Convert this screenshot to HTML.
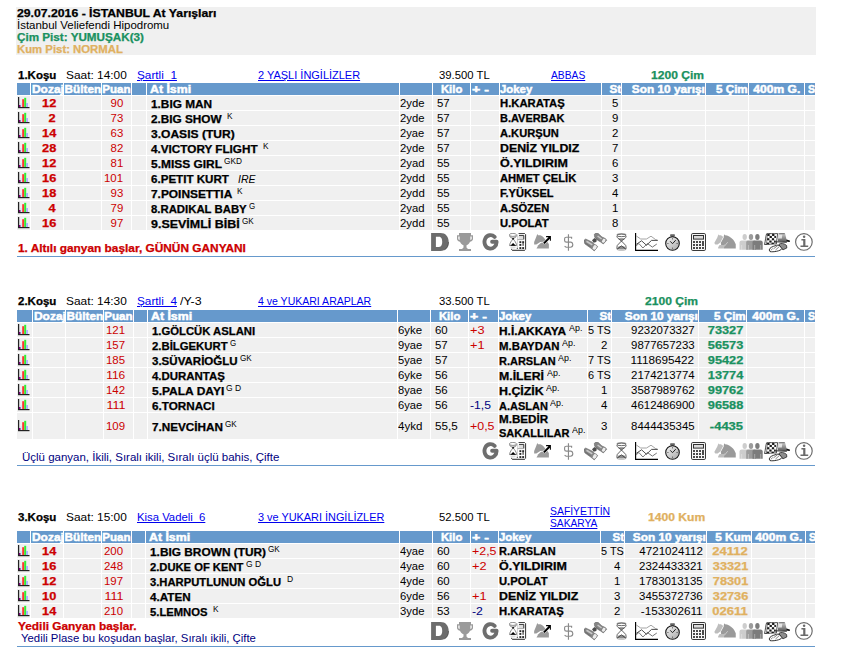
<!DOCTYPE html>
<html><head><meta charset="utf-8"><title>İstanbul At Yarışları</title>
<style>
html,body{margin:0;padding:0;background:#fff}
body{width:845px;height:662px;position:relative;overflow:hidden;font-family:"Liberation Sans",sans-serif;font-size:10.2px;line-height:12px;color:#000}
.r,.t,.c,.a{position:absolute}
.t{white-space:nowrap;height:12px;transform-origin:0 0}
.b{font-weight:bold;-webkit-text-stroke:0.25px} .u{text-decoration:underline} .i{font-style:italic}
.c{overflow:hidden}
.h{-webkit-text-stroke:0.45px #fff}
</style></head>
<body>
<svg width="0" height="0" style="position:absolute"><defs>
<linearGradient id="gw" x1="0" y1="0" x2="1" y2="1"><stop offset="0" stop-color="#f4f4f4"/><stop offset="1" stop-color="#a8a8a8"/></linearGradient>
<linearGradient id="gh" x1="0" y1="0" x2="0" y2="1"><stop offset="0" stop-color="#ccc"/><stop offset="1" stop-color="#555"/></linearGradient>
<symbol id="bar" viewBox="0 0 12 12"><rect x="0" y="0" width="1.200" height="11" fill="#222"/><rect x="0" y="10" width="11.500" height="1.200" fill="#222"/><rect x="2.200" y="6" width="2" height="4" fill="#d4ecf7"/><rect x="4.200" y="2.200" width="2" height="7.800" fill="#f33"/><rect x="6.200" y="0.800" width="2" height="9.200" fill="#3e3"/><rect x="8.200" y="6" width="1.700" height="4" fill="#a9a9ff"/><rect x="1" y="8" width="1.500" height="2" fill="#707"/></symbol>
<symbol id="iD" viewBox="0 0 19 20"><path fill-rule="evenodd" d="M.1.100H9.500C14.500.100 17.700 3.500 17.700 9S14.500 17.900 9.500 17.900H.1ZM4.900 3.700V13.900H8C10.400 13.900 11.200 11.500 11.200 8.800 11.200 6 10.400 3.700 8 3.700Z" fill="#6c6c6c"/><path d="M13.500 16.800C16.200 15.500 17.500 12.500 17.500 9" fill="none" stroke="#3c3c3c" stroke-width=".6"/></symbol>
<symbol id="iT" viewBox="0 0 19 20"><path fill-rule="evenodd" d="M3 .1H15V2.300H17V6C17 7.500 15.500 8.500 14 8.700 13.300 10.500 12 11.500 10.500 12.200V14.600L12 16H15V17.900H3V16H6L7.500 14.600V12.200C6 11.500 4.700 10.500 4 8.700 2.500 8.500 1 7.500 1 6V2.300H3ZM2.300 3.600V5.600C2.300 6.300 2.800 6.800 3.600 7V3.600ZM15.700 3.600H14.400V7C15.200 6.800 15.700 6.300 15.700 5.600Z" fill="#9a9a9a"/></symbol>
<symbol id="iG" viewBox="0 0 19 20"><path d="M12.600 3.900A6.060 6.720 0 1 0 14.600 8.800H10.100" fill="none" stroke="#6e6e6e" stroke-width="3.900" stroke-linecap="round" stroke-linejoin="round"/></symbol>
<symbol id="iCH" viewBox="0 0 19 20"><rect x="8.300" y=".5" width="8.300" height="16.900" rx=".8" fill="#fff"/><path d="M9.600.5H15.900" fill="none" stroke="#333" stroke-width=".9"/><path d="M16.600 1.200V16.600" fill="none" stroke="#333" stroke-width="1"/><path d="M3.100 17.300H15.900" fill="none" stroke="#333" stroke-width="1.100"/><path d="M8.500 1.500V14" stroke="#bbb" stroke-width=".6"/><rect x="9.600" y="2.700" width="5.200" height="3.700" fill="#ddd"/><path d="M10 2.400H14.800V6.400" fill="none" stroke="#333" stroke-width="1"/><path d="M8.600 6.600H14.800" stroke="#888" stroke-width=".7"/><g fill="#2a2a2a"><rect x="10.400" y="8.200" width="1.900" height="1.900"/><rect x="13.200" y="8.200" width="1.900" height="1.900"/><rect x="10.400" y="11" width="1.900" height="1.900"/><rect x="10.400" y="14.100" width="1.900" height="1.900"/><rect x="13.200" y="14.100" width="1.900" height="1.900"/><rect x="7.800" y="14.700" width="1.100" height="1.100"/><rect x="2.100" y="15.800" width="1" height="1"/></g><rect x="13.300" y="10" width="1.700" height="2.800" fill="#777"/><path d="M.4 2.600C.8 4.500 3.300 5 4.100 5.800 4.900 5 7.200 4.500 7.600 2.600ZM4.100 5.800C2.500 8 .9 9.500.6 12.600H7.600C7.300 9.500 5.700 8 4.100 5.800Z" fill="#fff" stroke="#555" stroke-width=".7"/><ellipse cx="3.900" cy="1.900" rx="3.600" ry="1.500" fill="#fff" stroke="#888" stroke-width=".9"/><path d="M.9 3.400C2.500 4.300 5.500 4.300 7.100 3.400" fill="none" stroke="#999" stroke-width=".8"/><circle cx="4.100" cy="5.700" r=".9" fill="#111"/><path d="M4.100 10.100L7 12.700H1.300Z" fill="#000"/><ellipse cx="4" cy="14.600" rx="2.800" ry=".9" fill="#ddd"/></symbol>
<symbol id="iAR" viewBox="0 0 19 20"><path d="M3.300 1L4.100 2.300H6.300C8.600 3 10.300 5 11 6.300L13 8.500 6.300 9 2.300 11.600H.15V9L2 4.600Z" fill="#9b9b9b"/><path d="M7.100 9.700L13.500 9 14.900 11.300V15.600H2.500L4.300 12.300Z" fill="#9b9b9b"/><path d="M12.100 3H16.900V7.800H15.900V5.700L10.600 11.100 9.200 9.700 14.500 4.200H12.100Z" fill="#000" stroke="#fff" stroke-width="1" paint-order="stroke" stroke-linejoin="round"/></symbol>
<symbol id="iDL" viewBox="0 0 12 20"><path d="M8.600 5.800V4.200H3.200C2.200 4.200 1.600 4.900 1.600 5.800V7.400C1.600 8.400 2.400 9.100 3.500 9.100H8C9.300 9.400 9.800 10.600 9.800 11.600 9.800 13 8.600 14.200 7.400 14.200H3.200L1.600 13.200M5.450 1.200V17.800" fill="none" stroke="#8a8a8a" stroke-width="1.150"/></symbol>
<symbol id="iBI" viewBox="0 0 24 20"><path d="M0 7.300L1.650 6 8 9 11.300 12 13.600 13.600 10.300 17.900 7 15.300 1 11 0 9Z" fill="#858585" stroke="#5a5a5a" stroke-width=".5"/><path d="M2.500 8.300L8.300 11.900" stroke="#c9c9c9" stroke-width="1.600"/><path d="M1.200 10L6.800 14" stroke="#6a6a6a" stroke-width=".9"/><path d="M10.300 1.300L12 0 14 .3 18 4 21.300 5.600 22.700 7.300 19.300 11 16.600 9 12.600 6.600 10.600 4Z" fill="#858585" stroke="#5a5a5a" stroke-width=".5"/><path d="M13.600 3L17.600 6" stroke="#c9c9c9" stroke-width="1.500"/><path d="M11.500 4.700L15.800 8" stroke="#6a6a6a" stroke-width=".8"/><path d="M8 7.200L10.500 5 12.800 6.800 12.300 9 9.600 9.800Z" fill="#4e4e4e"/><ellipse cx="10.700" cy="14.400" rx="2.100" ry="2.900" transform="rotate(33 10.700 14.400)" fill="#ececec" stroke="#666" stroke-width=".5"/><ellipse cx="19.700" cy="7.700" rx="1.900" ry="2.600" transform="rotate(33 19.700 7.700)" fill="#ececec" stroke="#666" stroke-width=".5"/></symbol>
<symbol id="iHG" viewBox="0 0 12 20"><ellipse cx="5.500" cy="1.700" rx="4.900" ry="1.600" fill="#b5b5b5"/><path d="M.9 3C1 4 1.200 4.600 2 5.400L5.460 8 9 5.400C9.800 4.600 10 4 10.100 3ZM5.460 8L1.300 12.400C.8 13.500.8 15 1.100 16.300H9.900C10.200 15 10.200 13.500 9.700 12.400Z" fill="#fff"/><path d="M2.400 5.600C3.500 5 7.500 5 8.600 5.600L5.460 7.900Z" fill="#8a8a8a"/><path d="M1.200 16.300A4.300 3.400 0 0 1 9.800 16.300Z" fill="#8a8a8a"/><path d="M.9 3C1 4 1.200 4.600 2 5.400L5.460 8 9 5.400C9.800 4.600 10 4 10.100 3M5.460 8L1.300 12.400C.8 13.500.8 15 1.100 16.300M5.460 8L9.700 12.400C10.200 13.500 10.200 15 9.900 16.300" fill="none" stroke="#3c3c3c" stroke-width=".8"/><path d="M1.100 16.300L5.460 12.800 9.900 16.300" fill="none" stroke="#3c3c3c" stroke-width=".8"/><ellipse cx="5.500" cy="2.400" rx="4.600" ry="1.250" fill="#fff" stroke="#444" stroke-width=".8"/><ellipse cx="5.500" cy="17" rx="4.200" ry=".8" fill="#b5b5b5"/></symbol>
<symbol id="iLC" viewBox="0 0 24 20"><path d="M.6 0V17.350H23" fill="none" stroke="#000" stroke-width="1.150"/><path d="M1.200 2.900L5.700 6H11.500L16 3.200 20.500 6.500 22.700 7.400" fill="none" stroke="#9a9a9a" stroke-width=".9"/><path d="M1.200 11.400L6.600 7.800 11.500 12.300 16.500 7.400H22.700" fill="none" stroke="#3a3a3a" stroke-width=".9"/><path d="M1.200 12.800L3.900 10.500 7.900 15 12.400 10.500 17.400 14.100 21.800 11" fill="none" stroke="#666" stroke-width=".9"/></symbol>
<symbol id="iSW" viewBox="0 0 16 20"><rect x="5.200" y="1" width="4.600" height="2.800" rx="1.200" fill="#555"/><rect x="5.800" y="1.300" width="3.400" height="1" rx=".5" fill="#999"/><circle cx="7.500" cy="10.500" r="6.800" fill="url(#gw)" stroke="#111" stroke-width="1.050"/><path d="M5.200 8.300L7.500 10.700 10.700 7.200" fill="none" stroke="#222" stroke-width="1"/><path d="M7.500 5.200V6.400M7.500 14.600V15.800M2.300 10.500H3.500M11.500 10.500H12.700" stroke="#444" stroke-width=".8"/></symbol>
<symbol id="iCA" viewBox="0 0 16 20"><rect x=".5" y=".5" width="14" height="17" rx="1.300" fill="#f7f7f7" stroke="#3a3a3a" stroke-width="1"/><rect x="2.500" y="2.500" width="10" height="3.600" fill="#dcdcdc" stroke="#333" stroke-width="1"/><g fill="#4a4a4a"><rect x="2" y="8" width="2" height="2"/><rect x="5" y="8" width="2" height="2"/><rect x="8" y="8" width="2" height="2"/><rect x="11" y="8" width="2" height="5"/><rect x="2" y="11" width="2" height="2"/><rect x="5" y="11" width="2" height="2"/><rect x="8" y="11" width="2" height="2"/><rect x="2" y="14" width="2" height="2"/><rect x="5" y="14" width="2" height="2"/><rect x="8" y="14" width="2" height="2"/><rect x="11" y="14" width="2" height="2"/></g></symbol>
<symbol id="iHO" viewBox="0 0 23 20"><path d="M10.450 1.150L11 2.300 13 2.500C16 3.500 19 6 20.300 8.300L21.750 11.300V15.600H10V13.500L7 11.800 6.800 9.600 9.600 4.600 10 2.300Z" fill="#9a9a9a"/><path d="M4.300 1.150L5 2.300H7L9 3.650V4.600L6.600 9.300 5.300 10.300 3.600 11.600H1.300L.3 10 3.300 4.600 4.100 2.300Z" fill="#bdbdbd"/><path d="M4.150 15.600V14.300L5.600 12H10L11.200 10.800 10.300 13.300 10 15.600Z" fill="#bdbdbd"/><path d="M13.700 9.200L10.300 13.400M9.400 4.300L6.700 9.500" stroke="#fff" stroke-width=".55" opacity=".85"/></symbol>
<symbol id="iPE" viewBox="0 0 25 20"><ellipse cx="5.700" cy="4" rx="2.200" ry="3" fill="#cdcdcd"/><path d="M.5 16.800V9.600C.5 8.300 1.500 7.600 2.700 7.600H8.500C9.700 7.600 10.500 8.300 10.500 9.600V16.800Z" fill="#cdcdcd"/><ellipse cx="12" cy="4" rx="2.200" ry="3" fill="#9c9c9c"/><path d="M7.200 16.800V9.600C7.200 8.300 8 7.600 9.200 7.600H15C16.200 7.600 17 8.300 17 9.600V16.800Z" fill="#9c9c9c"/><ellipse cx="18.400" cy="4" rx="2.200" ry="3" fill="#7c7c7c"/><path d="M13.500 16.800V9.600C13.500 8.300 14.300 7.600 15.500 7.600H21.500C22.700 7.600 23.700 8.300 23.700 9.600V16.800Z" fill="#7c7c7c"/><path d="M2.700 12V16.800M9.400 12V16.800M15.700 12V16.800M21.700 12V16.800" stroke="#fff" stroke-width=".5" opacity=".7"/></symbol>
<symbol id="iFL" viewBox="0 0 27 20"><path d="M2.600.8C5 .2 9 1 13.600.6L12.300 11C9 10.500 4 11.800.5 11.500 1.500 8 1.600 3.500 2.600.8Z" fill="#fff" stroke="#222" stroke-width=".8"/><g fill="#1a1a1a"><rect x="3.35" y="0.90" width="2.3" height="2.1"/><rect x="3.09" y="5.20" width="2.3" height="2.1"/><rect x="2.82" y="9.60" width="2.3" height="1.5"/><rect x="5.58" y="2.90" width="2.3" height="2.1"/><rect x="5.30" y="7.50" width="2.3" height="2.1"/><rect x="8.10" y="0.90" width="2.3" height="2.1"/><rect x="7.84" y="5.20" width="2.3" height="2.1"/><rect x="7.57" y="9.60" width="2.3" height="1.5"/><rect x="10.33" y="2.90" width="1.6" height="2.1"/><rect x="10.05" y="7.50" width="1.6" height="2.1"/></g><path d="M3.700 1.200C3 4 2.900 8 2.300 11.300" fill="none" stroke="#333" stroke-width=".6"/><path d="M13.800 8.400L14.600 1.300C16 .3 20 .3 21.200.8L22.500 6.500 24.500 7.500 22.800 9.300Z" fill="url(#gh)"/><path d="M14.300 3.800L15 1.600H18.300L17.800 5.600H14.100Z" fill="#f4f4f4" opacity=".8"/><path d="M14.600.7H20.800" stroke="#333" stroke-width=".7"/><path d="M10 8.300L22.600 8.700 22.800 9.700 10.200 9.200Z" fill="#333"/><path d="M22.500 6.600L25.800 7.600 26 8.700 24.800 9 22.600 8.200Z" fill="#111"/><path d="M15 11.300C16.500 9.800 20.500 10.300 22.600 12.500L22.800 15 19 16.800 15.500 14Z" fill="#8e8e8e" stroke="#222" stroke-width=".75"/><path d="M5.200 17C5.500 14.500 9 13.500 11 12.800 13 11.800 15 12 16 13L17.900 15.600C17 18 9 19.300 6 18.600Z" fill="#fff" stroke="#111" stroke-width=".85"/><path d="M9.500 15.800L13.500 12.800M11.500 17L15.300 13.600M7 17.400L8.500 15.500" stroke="#333" stroke-width=".6"/></symbol>
<symbol id="iIN" viewBox="0 0 19 20"><circle cx="8.900" cy="8.950" r="8.300" fill="#fff" stroke="#6a6a6a" stroke-width="1.150"/><circle cx="9.100" cy="3.700" r="1.250" fill="#6a6a6a"/><path d="M6.400 6H10.400V12.400H13.200V14.100H5.500V12.400H8.200V7.500H6.400Z" fill="#6a6a6a"/></symbol>
</defs></svg>

<div class="r" style="left:16px;top:7px;width:800px;height:48px;background:#f0f0f0"></div>
<div class="r" style="left:17px;top:83px;width:13px;height:12px;background:#6699cc"></div>
<div class="r" style="left:31px;top:83px;width:32px;height:12px;background:#6699cc"></div>
<div class="r" style="left:64px;top:83px;width:37px;height:12px;background:#6699cc"></div>
<div class="r" style="left:102px;top:83px;width:29px;height:12px;background:#6699cc"></div>
<div class="r" style="left:132px;top:83px;width:14px;height:12px;background:#6699cc"></div>
<div class="r" style="left:147px;top:83px;width:252px;height:12px;background:#6699cc"></div>
<div class="r" style="left:400px;top:83px;width:32px;height:12px;background:#6699cc"></div>
<div class="r" style="left:433px;top:83px;width:37px;height:12px;background:#6699cc"></div>
<div class="r" style="left:471px;top:83px;width:28px;height:12px;background:#6699cc"></div>
<div class="r" style="left:500px;top:83px;width:101px;height:12px;background:#6699cc"></div>
<div class="r" style="left:602px;top:83px;width:19px;height:12px;background:#6699cc"></div>
<div class="r" style="left:622px;top:83px;width:83px;height:12px;background:#6699cc"></div>
<div class="r" style="left:706px;top:83px;width:42px;height:12px;background:#6699cc"></div>
<div class="r" style="left:749px;top:83px;width:55px;height:12px;background:#6699cc"></div>
<div class="r" style="left:805px;top:83px;width:10px;height:12px;background:#6699cc"></div>
<div class="r" style="left:17px;top:96px;width:13px;height:14px;background:#f0f0f0"></div>
<div class="r" style="left:31px;top:96px;width:32px;height:14px;background:#f0f0f0"></div>
<div class="r" style="left:64px;top:96px;width:37px;height:14px;background:#f0f0f0"></div>
<div class="r" style="left:102px;top:96px;width:29px;height:14px;background:#f0f0f0"></div>
<div class="r" style="left:132px;top:96px;width:14px;height:14px;background:#f0f0f0"></div>
<div class="r" style="left:147px;top:96px;width:252px;height:14px;background:#f0f0f0"></div>
<div class="r" style="left:400px;top:96px;width:32px;height:14px;background:#f0f0f0"></div>
<div class="r" style="left:433px;top:96px;width:37px;height:14px;background:#f0f0f0"></div>
<div class="r" style="left:471px;top:96px;width:28px;height:14px;background:#f0f0f0"></div>
<div class="r" style="left:500px;top:96px;width:101px;height:14px;background:#f0f0f0"></div>
<div class="r" style="left:602px;top:96px;width:19px;height:14px;background:#f0f0f0"></div>
<div class="r" style="left:622px;top:96px;width:83px;height:14px;background:#f0f0f0"></div>
<div class="r" style="left:706px;top:96px;width:42px;height:14px;background:#f0f0f0"></div>
<div class="r" style="left:749px;top:96px;width:55px;height:14px;background:#f0f0f0"></div>
<div class="r" style="left:805px;top:96px;width:10px;height:14px;background:#f0f0f0"></div>
<div class="r" style="left:17px;top:111px;width:13px;height:14px;background:#f0f0f0"></div>
<div class="r" style="left:31px;top:111px;width:32px;height:14px;background:#f0f0f0"></div>
<div class="r" style="left:64px;top:111px;width:37px;height:14px;background:#f0f0f0"></div>
<div class="r" style="left:102px;top:111px;width:29px;height:14px;background:#f0f0f0"></div>
<div class="r" style="left:132px;top:111px;width:14px;height:14px;background:#f0f0f0"></div>
<div class="r" style="left:147px;top:111px;width:252px;height:14px;background:#f0f0f0"></div>
<div class="r" style="left:400px;top:111px;width:32px;height:14px;background:#f0f0f0"></div>
<div class="r" style="left:433px;top:111px;width:37px;height:14px;background:#f0f0f0"></div>
<div class="r" style="left:471px;top:111px;width:28px;height:14px;background:#f0f0f0"></div>
<div class="r" style="left:500px;top:111px;width:101px;height:14px;background:#f0f0f0"></div>
<div class="r" style="left:602px;top:111px;width:19px;height:14px;background:#f0f0f0"></div>
<div class="r" style="left:622px;top:111px;width:83px;height:14px;background:#f0f0f0"></div>
<div class="r" style="left:706px;top:111px;width:42px;height:14px;background:#f0f0f0"></div>
<div class="r" style="left:749px;top:111px;width:55px;height:14px;background:#f0f0f0"></div>
<div class="r" style="left:805px;top:111px;width:10px;height:14px;background:#f0f0f0"></div>
<div class="r" style="left:17px;top:126px;width:13px;height:14px;background:#f0f0f0"></div>
<div class="r" style="left:31px;top:126px;width:32px;height:14px;background:#f0f0f0"></div>
<div class="r" style="left:64px;top:126px;width:37px;height:14px;background:#f0f0f0"></div>
<div class="r" style="left:102px;top:126px;width:29px;height:14px;background:#f0f0f0"></div>
<div class="r" style="left:132px;top:126px;width:14px;height:14px;background:#f0f0f0"></div>
<div class="r" style="left:147px;top:126px;width:252px;height:14px;background:#f0f0f0"></div>
<div class="r" style="left:400px;top:126px;width:32px;height:14px;background:#f0f0f0"></div>
<div class="r" style="left:433px;top:126px;width:37px;height:14px;background:#f0f0f0"></div>
<div class="r" style="left:471px;top:126px;width:28px;height:14px;background:#f0f0f0"></div>
<div class="r" style="left:500px;top:126px;width:101px;height:14px;background:#f0f0f0"></div>
<div class="r" style="left:602px;top:126px;width:19px;height:14px;background:#f0f0f0"></div>
<div class="r" style="left:622px;top:126px;width:83px;height:14px;background:#f0f0f0"></div>
<div class="r" style="left:706px;top:126px;width:42px;height:14px;background:#f0f0f0"></div>
<div class="r" style="left:749px;top:126px;width:55px;height:14px;background:#f0f0f0"></div>
<div class="r" style="left:805px;top:126px;width:10px;height:14px;background:#f0f0f0"></div>
<div class="r" style="left:17px;top:141px;width:13px;height:14px;background:#f0f0f0"></div>
<div class="r" style="left:31px;top:141px;width:32px;height:14px;background:#f0f0f0"></div>
<div class="r" style="left:64px;top:141px;width:37px;height:14px;background:#f0f0f0"></div>
<div class="r" style="left:102px;top:141px;width:29px;height:14px;background:#f0f0f0"></div>
<div class="r" style="left:132px;top:141px;width:14px;height:14px;background:#f0f0f0"></div>
<div class="r" style="left:147px;top:141px;width:252px;height:14px;background:#f0f0f0"></div>
<div class="r" style="left:400px;top:141px;width:32px;height:14px;background:#f0f0f0"></div>
<div class="r" style="left:433px;top:141px;width:37px;height:14px;background:#f0f0f0"></div>
<div class="r" style="left:471px;top:141px;width:28px;height:14px;background:#f0f0f0"></div>
<div class="r" style="left:500px;top:141px;width:101px;height:14px;background:#f0f0f0"></div>
<div class="r" style="left:602px;top:141px;width:19px;height:14px;background:#f0f0f0"></div>
<div class="r" style="left:622px;top:141px;width:83px;height:14px;background:#f0f0f0"></div>
<div class="r" style="left:706px;top:141px;width:42px;height:14px;background:#f0f0f0"></div>
<div class="r" style="left:749px;top:141px;width:55px;height:14px;background:#f0f0f0"></div>
<div class="r" style="left:805px;top:141px;width:10px;height:14px;background:#f0f0f0"></div>
<div class="r" style="left:17px;top:156px;width:13px;height:14px;background:#f0f0f0"></div>
<div class="r" style="left:31px;top:156px;width:32px;height:14px;background:#f0f0f0"></div>
<div class="r" style="left:64px;top:156px;width:37px;height:14px;background:#f0f0f0"></div>
<div class="r" style="left:102px;top:156px;width:29px;height:14px;background:#f0f0f0"></div>
<div class="r" style="left:132px;top:156px;width:14px;height:14px;background:#f0f0f0"></div>
<div class="r" style="left:147px;top:156px;width:252px;height:14px;background:#f0f0f0"></div>
<div class="r" style="left:400px;top:156px;width:32px;height:14px;background:#f0f0f0"></div>
<div class="r" style="left:433px;top:156px;width:37px;height:14px;background:#f0f0f0"></div>
<div class="r" style="left:471px;top:156px;width:28px;height:14px;background:#f0f0f0"></div>
<div class="r" style="left:500px;top:156px;width:101px;height:14px;background:#f0f0f0"></div>
<div class="r" style="left:602px;top:156px;width:19px;height:14px;background:#f0f0f0"></div>
<div class="r" style="left:622px;top:156px;width:83px;height:14px;background:#f0f0f0"></div>
<div class="r" style="left:706px;top:156px;width:42px;height:14px;background:#f0f0f0"></div>
<div class="r" style="left:749px;top:156px;width:55px;height:14px;background:#f0f0f0"></div>
<div class="r" style="left:805px;top:156px;width:10px;height:14px;background:#f0f0f0"></div>
<div class="r" style="left:17px;top:171px;width:13px;height:14px;background:#f0f0f0"></div>
<div class="r" style="left:31px;top:171px;width:32px;height:14px;background:#f0f0f0"></div>
<div class="r" style="left:64px;top:171px;width:37px;height:14px;background:#f0f0f0"></div>
<div class="r" style="left:102px;top:171px;width:29px;height:14px;background:#f0f0f0"></div>
<div class="r" style="left:132px;top:171px;width:14px;height:14px;background:#f0f0f0"></div>
<div class="r" style="left:147px;top:171px;width:252px;height:14px;background:#f0f0f0"></div>
<div class="r" style="left:400px;top:171px;width:32px;height:14px;background:#f0f0f0"></div>
<div class="r" style="left:433px;top:171px;width:37px;height:14px;background:#f0f0f0"></div>
<div class="r" style="left:471px;top:171px;width:28px;height:14px;background:#f0f0f0"></div>
<div class="r" style="left:500px;top:171px;width:101px;height:14px;background:#f0f0f0"></div>
<div class="r" style="left:602px;top:171px;width:19px;height:14px;background:#f0f0f0"></div>
<div class="r" style="left:622px;top:171px;width:83px;height:14px;background:#f0f0f0"></div>
<div class="r" style="left:706px;top:171px;width:42px;height:14px;background:#f0f0f0"></div>
<div class="r" style="left:749px;top:171px;width:55px;height:14px;background:#f0f0f0"></div>
<div class="r" style="left:805px;top:171px;width:10px;height:14px;background:#f0f0f0"></div>
<div class="r" style="left:17px;top:186px;width:13px;height:14px;background:#f0f0f0"></div>
<div class="r" style="left:31px;top:186px;width:32px;height:14px;background:#f0f0f0"></div>
<div class="r" style="left:64px;top:186px;width:37px;height:14px;background:#f0f0f0"></div>
<div class="r" style="left:102px;top:186px;width:29px;height:14px;background:#f0f0f0"></div>
<div class="r" style="left:132px;top:186px;width:14px;height:14px;background:#f0f0f0"></div>
<div class="r" style="left:147px;top:186px;width:252px;height:14px;background:#f0f0f0"></div>
<div class="r" style="left:400px;top:186px;width:32px;height:14px;background:#f0f0f0"></div>
<div class="r" style="left:433px;top:186px;width:37px;height:14px;background:#f0f0f0"></div>
<div class="r" style="left:471px;top:186px;width:28px;height:14px;background:#f0f0f0"></div>
<div class="r" style="left:500px;top:186px;width:101px;height:14px;background:#f0f0f0"></div>
<div class="r" style="left:602px;top:186px;width:19px;height:14px;background:#f0f0f0"></div>
<div class="r" style="left:622px;top:186px;width:83px;height:14px;background:#f0f0f0"></div>
<div class="r" style="left:706px;top:186px;width:42px;height:14px;background:#f0f0f0"></div>
<div class="r" style="left:749px;top:186px;width:55px;height:14px;background:#f0f0f0"></div>
<div class="r" style="left:805px;top:186px;width:10px;height:14px;background:#f0f0f0"></div>
<div class="r" style="left:17px;top:201px;width:13px;height:14px;background:#f0f0f0"></div>
<div class="r" style="left:31px;top:201px;width:32px;height:14px;background:#f0f0f0"></div>
<div class="r" style="left:64px;top:201px;width:37px;height:14px;background:#f0f0f0"></div>
<div class="r" style="left:102px;top:201px;width:29px;height:14px;background:#f0f0f0"></div>
<div class="r" style="left:132px;top:201px;width:14px;height:14px;background:#f0f0f0"></div>
<div class="r" style="left:147px;top:201px;width:252px;height:14px;background:#f0f0f0"></div>
<div class="r" style="left:400px;top:201px;width:32px;height:14px;background:#f0f0f0"></div>
<div class="r" style="left:433px;top:201px;width:37px;height:14px;background:#f0f0f0"></div>
<div class="r" style="left:471px;top:201px;width:28px;height:14px;background:#f0f0f0"></div>
<div class="r" style="left:500px;top:201px;width:101px;height:14px;background:#f0f0f0"></div>
<div class="r" style="left:602px;top:201px;width:19px;height:14px;background:#f0f0f0"></div>
<div class="r" style="left:622px;top:201px;width:83px;height:14px;background:#f0f0f0"></div>
<div class="r" style="left:706px;top:201px;width:42px;height:14px;background:#f0f0f0"></div>
<div class="r" style="left:749px;top:201px;width:55px;height:14px;background:#f0f0f0"></div>
<div class="r" style="left:805px;top:201px;width:10px;height:14px;background:#f0f0f0"></div>
<div class="r" style="left:17px;top:216px;width:13px;height:14px;background:#f0f0f0"></div>
<div class="r" style="left:31px;top:216px;width:32px;height:14px;background:#f0f0f0"></div>
<div class="r" style="left:64px;top:216px;width:37px;height:14px;background:#f0f0f0"></div>
<div class="r" style="left:102px;top:216px;width:29px;height:14px;background:#f0f0f0"></div>
<div class="r" style="left:132px;top:216px;width:14px;height:14px;background:#f0f0f0"></div>
<div class="r" style="left:147px;top:216px;width:252px;height:14px;background:#f0f0f0"></div>
<div class="r" style="left:400px;top:216px;width:32px;height:14px;background:#f0f0f0"></div>
<div class="r" style="left:433px;top:216px;width:37px;height:14px;background:#f0f0f0"></div>
<div class="r" style="left:471px;top:216px;width:28px;height:14px;background:#f0f0f0"></div>
<div class="r" style="left:500px;top:216px;width:101px;height:14px;background:#f0f0f0"></div>
<div class="r" style="left:602px;top:216px;width:19px;height:14px;background:#f0f0f0"></div>
<div class="r" style="left:622px;top:216px;width:83px;height:14px;background:#f0f0f0"></div>
<div class="r" style="left:706px;top:216px;width:42px;height:14px;background:#f0f0f0"></div>
<div class="r" style="left:749px;top:216px;width:55px;height:14px;background:#f0f0f0"></div>
<div class="r" style="left:805px;top:216px;width:10px;height:14px;background:#f0f0f0"></div>
<div class="r" style="left:17px;top:256px;width:798px;height:1px;background:#6699cc"></div>
<div class="r" style="left:17px;top:310px;width:15px;height:12px;background:#6699cc"></div>
<div class="r" style="left:33px;top:310px;width:32px;height:12px;background:#6699cc"></div>
<div class="r" style="left:66px;top:310px;width:37px;height:12px;background:#6699cc"></div>
<div class="r" style="left:104px;top:310px;width:29px;height:12px;background:#6699cc"></div>
<div class="r" style="left:134px;top:310px;width:13px;height:12px;background:#6699cc"></div>
<div class="r" style="left:148px;top:310px;width:249px;height:12px;background:#6699cc"></div>
<div class="r" style="left:398px;top:310px;width:32px;height:12px;background:#6699cc"></div>
<div class="r" style="left:431px;top:310px;width:37px;height:12px;background:#6699cc"></div>
<div class="r" style="left:469px;top:310px;width:29px;height:12px;background:#6699cc"></div>
<div class="r" style="left:499px;top:310px;width:88px;height:12px;background:#6699cc"></div>
<div class="r" style="left:588px;top:310px;width:23px;height:12px;background:#6699cc"></div>
<div class="r" style="left:612px;top:310px;width:86px;height:12px;background:#6699cc"></div>
<div class="r" style="left:699px;top:310px;width:47px;height:12px;background:#6699cc"></div>
<div class="r" style="left:747px;top:310px;width:57px;height:12px;background:#6699cc"></div>
<div class="r" style="left:805px;top:310px;width:10px;height:12px;background:#6699cc"></div>
<div class="r" style="left:17px;top:323px;width:15px;height:14px;background:#f0f0f0"></div>
<div class="r" style="left:33px;top:323px;width:32px;height:14px;background:#f0f0f0"></div>
<div class="r" style="left:66px;top:323px;width:37px;height:14px;background:#f0f0f0"></div>
<div class="r" style="left:104px;top:323px;width:29px;height:14px;background:#f0f0f0"></div>
<div class="r" style="left:134px;top:323px;width:13px;height:14px;background:#f0f0f0"></div>
<div class="r" style="left:148px;top:323px;width:249px;height:14px;background:#f0f0f0"></div>
<div class="r" style="left:398px;top:323px;width:32px;height:14px;background:#f0f0f0"></div>
<div class="r" style="left:431px;top:323px;width:37px;height:14px;background:#f0f0f0"></div>
<div class="r" style="left:469px;top:323px;width:29px;height:14px;background:#f0f0f0"></div>
<div class="r" style="left:499px;top:323px;width:88px;height:14px;background:#f0f0f0"></div>
<div class="r" style="left:588px;top:323px;width:23px;height:14px;background:#f0f0f0"></div>
<div class="r" style="left:612px;top:323px;width:86px;height:14px;background:#f0f0f0"></div>
<div class="r" style="left:699px;top:323px;width:47px;height:14px;background:#f0f0f0"></div>
<div class="r" style="left:747px;top:323px;width:57px;height:14px;background:#f0f0f0"></div>
<div class="r" style="left:805px;top:323px;width:10px;height:14px;background:#f0f0f0"></div>
<div class="r" style="left:17px;top:338px;width:15px;height:14px;background:#f0f0f0"></div>
<div class="r" style="left:33px;top:338px;width:32px;height:14px;background:#f0f0f0"></div>
<div class="r" style="left:66px;top:338px;width:37px;height:14px;background:#f0f0f0"></div>
<div class="r" style="left:104px;top:338px;width:29px;height:14px;background:#f0f0f0"></div>
<div class="r" style="left:134px;top:338px;width:13px;height:14px;background:#f0f0f0"></div>
<div class="r" style="left:148px;top:338px;width:249px;height:14px;background:#f0f0f0"></div>
<div class="r" style="left:398px;top:338px;width:32px;height:14px;background:#f0f0f0"></div>
<div class="r" style="left:431px;top:338px;width:37px;height:14px;background:#f0f0f0"></div>
<div class="r" style="left:469px;top:338px;width:29px;height:14px;background:#f0f0f0"></div>
<div class="r" style="left:499px;top:338px;width:88px;height:14px;background:#f0f0f0"></div>
<div class="r" style="left:588px;top:338px;width:23px;height:14px;background:#f0f0f0"></div>
<div class="r" style="left:612px;top:338px;width:86px;height:14px;background:#f0f0f0"></div>
<div class="r" style="left:699px;top:338px;width:47px;height:14px;background:#f0f0f0"></div>
<div class="r" style="left:747px;top:338px;width:57px;height:14px;background:#f0f0f0"></div>
<div class="r" style="left:805px;top:338px;width:10px;height:14px;background:#f0f0f0"></div>
<div class="r" style="left:17px;top:353px;width:15px;height:14px;background:#f0f0f0"></div>
<div class="r" style="left:33px;top:353px;width:32px;height:14px;background:#f0f0f0"></div>
<div class="r" style="left:66px;top:353px;width:37px;height:14px;background:#f0f0f0"></div>
<div class="r" style="left:104px;top:353px;width:29px;height:14px;background:#f0f0f0"></div>
<div class="r" style="left:134px;top:353px;width:13px;height:14px;background:#f0f0f0"></div>
<div class="r" style="left:148px;top:353px;width:249px;height:14px;background:#f0f0f0"></div>
<div class="r" style="left:398px;top:353px;width:32px;height:14px;background:#f0f0f0"></div>
<div class="r" style="left:431px;top:353px;width:37px;height:14px;background:#f0f0f0"></div>
<div class="r" style="left:469px;top:353px;width:29px;height:14px;background:#f0f0f0"></div>
<div class="r" style="left:499px;top:353px;width:88px;height:14px;background:#f0f0f0"></div>
<div class="r" style="left:588px;top:353px;width:23px;height:14px;background:#f0f0f0"></div>
<div class="r" style="left:612px;top:353px;width:86px;height:14px;background:#f0f0f0"></div>
<div class="r" style="left:699px;top:353px;width:47px;height:14px;background:#f0f0f0"></div>
<div class="r" style="left:747px;top:353px;width:57px;height:14px;background:#f0f0f0"></div>
<div class="r" style="left:805px;top:353px;width:10px;height:14px;background:#f0f0f0"></div>
<div class="r" style="left:17px;top:368px;width:15px;height:14px;background:#f0f0f0"></div>
<div class="r" style="left:33px;top:368px;width:32px;height:14px;background:#f0f0f0"></div>
<div class="r" style="left:66px;top:368px;width:37px;height:14px;background:#f0f0f0"></div>
<div class="r" style="left:104px;top:368px;width:29px;height:14px;background:#f0f0f0"></div>
<div class="r" style="left:134px;top:368px;width:13px;height:14px;background:#f0f0f0"></div>
<div class="r" style="left:148px;top:368px;width:249px;height:14px;background:#f0f0f0"></div>
<div class="r" style="left:398px;top:368px;width:32px;height:14px;background:#f0f0f0"></div>
<div class="r" style="left:431px;top:368px;width:37px;height:14px;background:#f0f0f0"></div>
<div class="r" style="left:469px;top:368px;width:29px;height:14px;background:#f0f0f0"></div>
<div class="r" style="left:499px;top:368px;width:88px;height:14px;background:#f0f0f0"></div>
<div class="r" style="left:588px;top:368px;width:23px;height:14px;background:#f0f0f0"></div>
<div class="r" style="left:612px;top:368px;width:86px;height:14px;background:#f0f0f0"></div>
<div class="r" style="left:699px;top:368px;width:47px;height:14px;background:#f0f0f0"></div>
<div class="r" style="left:747px;top:368px;width:57px;height:14px;background:#f0f0f0"></div>
<div class="r" style="left:805px;top:368px;width:10px;height:14px;background:#f0f0f0"></div>
<div class="r" style="left:17px;top:383px;width:15px;height:14px;background:#f0f0f0"></div>
<div class="r" style="left:33px;top:383px;width:32px;height:14px;background:#f0f0f0"></div>
<div class="r" style="left:66px;top:383px;width:37px;height:14px;background:#f0f0f0"></div>
<div class="r" style="left:104px;top:383px;width:29px;height:14px;background:#f0f0f0"></div>
<div class="r" style="left:134px;top:383px;width:13px;height:14px;background:#f0f0f0"></div>
<div class="r" style="left:148px;top:383px;width:249px;height:14px;background:#f0f0f0"></div>
<div class="r" style="left:398px;top:383px;width:32px;height:14px;background:#f0f0f0"></div>
<div class="r" style="left:431px;top:383px;width:37px;height:14px;background:#f0f0f0"></div>
<div class="r" style="left:469px;top:383px;width:29px;height:14px;background:#f0f0f0"></div>
<div class="r" style="left:499px;top:383px;width:88px;height:14px;background:#f0f0f0"></div>
<div class="r" style="left:588px;top:383px;width:23px;height:14px;background:#f0f0f0"></div>
<div class="r" style="left:612px;top:383px;width:86px;height:14px;background:#f0f0f0"></div>
<div class="r" style="left:699px;top:383px;width:47px;height:14px;background:#f0f0f0"></div>
<div class="r" style="left:747px;top:383px;width:57px;height:14px;background:#f0f0f0"></div>
<div class="r" style="left:805px;top:383px;width:10px;height:14px;background:#f0f0f0"></div>
<div class="r" style="left:17px;top:398px;width:15px;height:14px;background:#f0f0f0"></div>
<div class="r" style="left:33px;top:398px;width:32px;height:14px;background:#f0f0f0"></div>
<div class="r" style="left:66px;top:398px;width:37px;height:14px;background:#f0f0f0"></div>
<div class="r" style="left:104px;top:398px;width:29px;height:14px;background:#f0f0f0"></div>
<div class="r" style="left:134px;top:398px;width:13px;height:14px;background:#f0f0f0"></div>
<div class="r" style="left:148px;top:398px;width:249px;height:14px;background:#f0f0f0"></div>
<div class="r" style="left:398px;top:398px;width:32px;height:14px;background:#f0f0f0"></div>
<div class="r" style="left:431px;top:398px;width:37px;height:14px;background:#f0f0f0"></div>
<div class="r" style="left:469px;top:398px;width:29px;height:14px;background:#f0f0f0"></div>
<div class="r" style="left:499px;top:398px;width:88px;height:14px;background:#f0f0f0"></div>
<div class="r" style="left:588px;top:398px;width:23px;height:14px;background:#f0f0f0"></div>
<div class="r" style="left:612px;top:398px;width:86px;height:14px;background:#f0f0f0"></div>
<div class="r" style="left:699px;top:398px;width:47px;height:14px;background:#f0f0f0"></div>
<div class="r" style="left:747px;top:398px;width:57px;height:14px;background:#f0f0f0"></div>
<div class="r" style="left:805px;top:398px;width:10px;height:14px;background:#f0f0f0"></div>
<div class="r" style="left:17px;top:413px;width:15px;height:26px;background:#f0f0f0"></div>
<div class="r" style="left:33px;top:413px;width:32px;height:26px;background:#f0f0f0"></div>
<div class="r" style="left:66px;top:413px;width:37px;height:26px;background:#f0f0f0"></div>
<div class="r" style="left:104px;top:413px;width:29px;height:26px;background:#f0f0f0"></div>
<div class="r" style="left:134px;top:413px;width:13px;height:26px;background:#f0f0f0"></div>
<div class="r" style="left:148px;top:413px;width:249px;height:26px;background:#f0f0f0"></div>
<div class="r" style="left:398px;top:413px;width:32px;height:26px;background:#f0f0f0"></div>
<div class="r" style="left:431px;top:413px;width:37px;height:26px;background:#f0f0f0"></div>
<div class="r" style="left:469px;top:413px;width:29px;height:26px;background:#f0f0f0"></div>
<div class="r" style="left:499px;top:413px;width:88px;height:26px;background:#f0f0f0"></div>
<div class="r" style="left:588px;top:413px;width:23px;height:26px;background:#f0f0f0"></div>
<div class="r" style="left:612px;top:413px;width:86px;height:26px;background:#f0f0f0"></div>
<div class="r" style="left:699px;top:413px;width:47px;height:26px;background:#f0f0f0"></div>
<div class="r" style="left:747px;top:413px;width:57px;height:26px;background:#f0f0f0"></div>
<div class="r" style="left:805px;top:413px;width:10px;height:26px;background:#f0f0f0"></div>
<div class="r" style="left:17px;top:465px;width:798px;height:1px;background:#6699cc"></div>
<div class="r" style="left:17px;top:531px;width:13px;height:12px;background:#6699cc"></div>
<div class="r" style="left:31px;top:531px;width:32px;height:12px;background:#6699cc"></div>
<div class="r" style="left:64px;top:531px;width:37px;height:12px;background:#6699cc"></div>
<div class="r" style="left:102px;top:531px;width:29px;height:12px;background:#6699cc"></div>
<div class="r" style="left:132px;top:531px;width:13px;height:12px;background:#6699cc"></div>
<div class="r" style="left:146px;top:531px;width:253px;height:12px;background:#6699cc"></div>
<div class="r" style="left:400px;top:531px;width:32px;height:12px;background:#6699cc"></div>
<div class="r" style="left:433px;top:531px;width:37px;height:12px;background:#6699cc"></div>
<div class="r" style="left:471px;top:531px;width:27px;height:12px;background:#6699cc"></div>
<div class="r" style="left:499px;top:531px;width:101px;height:12px;background:#6699cc"></div>
<div class="r" style="left:601px;top:531px;width:23px;height:12px;background:#6699cc"></div>
<div class="r" style="left:625px;top:531px;width:81px;height:12px;background:#6699cc"></div>
<div class="r" style="left:707px;top:531px;width:44px;height:12px;background:#6699cc"></div>
<div class="r" style="left:752px;top:531px;width:53px;height:12px;background:#6699cc"></div>
<div class="r" style="left:806px;top:531px;width:9px;height:12px;background:#6699cc"></div>
<div class="r" style="left:17px;top:544px;width:13px;height:14px;background:#f0f0f0"></div>
<div class="r" style="left:31px;top:544px;width:32px;height:14px;background:#f0f0f0"></div>
<div class="r" style="left:64px;top:544px;width:37px;height:14px;background:#f0f0f0"></div>
<div class="r" style="left:102px;top:544px;width:29px;height:14px;background:#f0f0f0"></div>
<div class="r" style="left:132px;top:544px;width:13px;height:14px;background:#f0f0f0"></div>
<div class="r" style="left:146px;top:544px;width:253px;height:14px;background:#f0f0f0"></div>
<div class="r" style="left:400px;top:544px;width:32px;height:14px;background:#f0f0f0"></div>
<div class="r" style="left:433px;top:544px;width:37px;height:14px;background:#f0f0f0"></div>
<div class="r" style="left:471px;top:544px;width:27px;height:14px;background:#f0f0f0"></div>
<div class="r" style="left:499px;top:544px;width:101px;height:14px;background:#f0f0f0"></div>
<div class="r" style="left:601px;top:544px;width:23px;height:14px;background:#f0f0f0"></div>
<div class="r" style="left:625px;top:544px;width:81px;height:14px;background:#f0f0f0"></div>
<div class="r" style="left:707px;top:544px;width:44px;height:14px;background:#f0f0f0"></div>
<div class="r" style="left:752px;top:544px;width:53px;height:14px;background:#f0f0f0"></div>
<div class="r" style="left:806px;top:544px;width:9px;height:14px;background:#f0f0f0"></div>
<div class="r" style="left:17px;top:559px;width:13px;height:14px;background:#f0f0f0"></div>
<div class="r" style="left:31px;top:559px;width:32px;height:14px;background:#f0f0f0"></div>
<div class="r" style="left:64px;top:559px;width:37px;height:14px;background:#f0f0f0"></div>
<div class="r" style="left:102px;top:559px;width:29px;height:14px;background:#f0f0f0"></div>
<div class="r" style="left:132px;top:559px;width:13px;height:14px;background:#f0f0f0"></div>
<div class="r" style="left:146px;top:559px;width:253px;height:14px;background:#f0f0f0"></div>
<div class="r" style="left:400px;top:559px;width:32px;height:14px;background:#f0f0f0"></div>
<div class="r" style="left:433px;top:559px;width:37px;height:14px;background:#f0f0f0"></div>
<div class="r" style="left:471px;top:559px;width:27px;height:14px;background:#f0f0f0"></div>
<div class="r" style="left:499px;top:559px;width:101px;height:14px;background:#f0f0f0"></div>
<div class="r" style="left:601px;top:559px;width:23px;height:14px;background:#f0f0f0"></div>
<div class="r" style="left:625px;top:559px;width:81px;height:14px;background:#f0f0f0"></div>
<div class="r" style="left:707px;top:559px;width:44px;height:14px;background:#f0f0f0"></div>
<div class="r" style="left:752px;top:559px;width:53px;height:14px;background:#f0f0f0"></div>
<div class="r" style="left:806px;top:559px;width:9px;height:14px;background:#f0f0f0"></div>
<div class="r" style="left:17px;top:574px;width:13px;height:14px;background:#f0f0f0"></div>
<div class="r" style="left:31px;top:574px;width:32px;height:14px;background:#f0f0f0"></div>
<div class="r" style="left:64px;top:574px;width:37px;height:14px;background:#f0f0f0"></div>
<div class="r" style="left:102px;top:574px;width:29px;height:14px;background:#f0f0f0"></div>
<div class="r" style="left:132px;top:574px;width:13px;height:14px;background:#f0f0f0"></div>
<div class="r" style="left:146px;top:574px;width:253px;height:14px;background:#f0f0f0"></div>
<div class="r" style="left:400px;top:574px;width:32px;height:14px;background:#f0f0f0"></div>
<div class="r" style="left:433px;top:574px;width:37px;height:14px;background:#f0f0f0"></div>
<div class="r" style="left:471px;top:574px;width:27px;height:14px;background:#f0f0f0"></div>
<div class="r" style="left:499px;top:574px;width:101px;height:14px;background:#f0f0f0"></div>
<div class="r" style="left:601px;top:574px;width:23px;height:14px;background:#f0f0f0"></div>
<div class="r" style="left:625px;top:574px;width:81px;height:14px;background:#f0f0f0"></div>
<div class="r" style="left:707px;top:574px;width:44px;height:14px;background:#f0f0f0"></div>
<div class="r" style="left:752px;top:574px;width:53px;height:14px;background:#f0f0f0"></div>
<div class="r" style="left:806px;top:574px;width:9px;height:14px;background:#f0f0f0"></div>
<div class="r" style="left:17px;top:589px;width:13px;height:14px;background:#f0f0f0"></div>
<div class="r" style="left:31px;top:589px;width:32px;height:14px;background:#f0f0f0"></div>
<div class="r" style="left:64px;top:589px;width:37px;height:14px;background:#f0f0f0"></div>
<div class="r" style="left:102px;top:589px;width:29px;height:14px;background:#f0f0f0"></div>
<div class="r" style="left:132px;top:589px;width:13px;height:14px;background:#f0f0f0"></div>
<div class="r" style="left:146px;top:589px;width:253px;height:14px;background:#f0f0f0"></div>
<div class="r" style="left:400px;top:589px;width:32px;height:14px;background:#f0f0f0"></div>
<div class="r" style="left:433px;top:589px;width:37px;height:14px;background:#f0f0f0"></div>
<div class="r" style="left:471px;top:589px;width:27px;height:14px;background:#f0f0f0"></div>
<div class="r" style="left:499px;top:589px;width:101px;height:14px;background:#f0f0f0"></div>
<div class="r" style="left:601px;top:589px;width:23px;height:14px;background:#f0f0f0"></div>
<div class="r" style="left:625px;top:589px;width:81px;height:14px;background:#f0f0f0"></div>
<div class="r" style="left:707px;top:589px;width:44px;height:14px;background:#f0f0f0"></div>
<div class="r" style="left:752px;top:589px;width:53px;height:14px;background:#f0f0f0"></div>
<div class="r" style="left:806px;top:589px;width:9px;height:14px;background:#f0f0f0"></div>
<div class="r" style="left:17px;top:604px;width:13px;height:14px;background:#f0f0f0"></div>
<div class="r" style="left:31px;top:604px;width:32px;height:14px;background:#f0f0f0"></div>
<div class="r" style="left:64px;top:604px;width:37px;height:14px;background:#f0f0f0"></div>
<div class="r" style="left:102px;top:604px;width:29px;height:14px;background:#f0f0f0"></div>
<div class="r" style="left:132px;top:604px;width:13px;height:14px;background:#f0f0f0"></div>
<div class="r" style="left:146px;top:604px;width:253px;height:14px;background:#f0f0f0"></div>
<div class="r" style="left:400px;top:604px;width:32px;height:14px;background:#f0f0f0"></div>
<div class="r" style="left:433px;top:604px;width:37px;height:14px;background:#f0f0f0"></div>
<div class="r" style="left:471px;top:604px;width:27px;height:14px;background:#f0f0f0"></div>
<div class="r" style="left:499px;top:604px;width:101px;height:14px;background:#f0f0f0"></div>
<div class="r" style="left:601px;top:604px;width:23px;height:14px;background:#f0f0f0"></div>
<div class="r" style="left:625px;top:604px;width:81px;height:14px;background:#f0f0f0"></div>
<div class="r" style="left:707px;top:604px;width:44px;height:14px;background:#f0f0f0"></div>
<div class="r" style="left:752px;top:604px;width:53px;height:14px;background:#f0f0f0"></div>
<div class="r" style="left:806px;top:604px;width:9px;height:14px;background:#f0f0f0"></div>
<div class="r" style="left:17px;top:646px;width:798px;height:1px;background:#6699cc"></div>
<svg class="a" style="left:18px;top:97px" width="12" height="12"><use href="#bar"/></svg>
<svg class="a" style="left:18px;top:112px" width="12" height="12"><use href="#bar"/></svg>
<svg class="a" style="left:18px;top:127px" width="12" height="12"><use href="#bar"/></svg>
<svg class="a" style="left:18px;top:142px" width="12" height="12"><use href="#bar"/></svg>
<svg class="a" style="left:18px;top:157px" width="12" height="12"><use href="#bar"/></svg>
<svg class="a" style="left:18px;top:172px" width="12" height="12"><use href="#bar"/></svg>
<svg class="a" style="left:18px;top:187px" width="12" height="12"><use href="#bar"/></svg>
<svg class="a" style="left:18px;top:202px" width="12" height="12"><use href="#bar"/></svg>
<svg class="a" style="left:18px;top:217px" width="12" height="12"><use href="#bar"/></svg>
<svg class="a" style="left:431px;top:233px" width="19" height="20"><use href="#iD"/></svg>
<svg class="a" style="left:456px;top:233px" width="19" height="20"><use href="#iT"/></svg>
<svg class="a" style="left:482px;top:233px" width="19" height="20"><use href="#iG"/></svg>
<svg class="a" style="left:509px;top:233px" width="19" height="20"><use href="#iCH"/></svg>
<svg class="a" style="left:534px;top:233px" width="19" height="20"><use href="#iAR"/></svg>
<svg class="a" style="left:563px;top:233px" width="12" height="20"><use href="#iDL"/></svg>
<svg class="a" style="left:584px;top:233px" width="24" height="20"><use href="#iBI"/></svg>
<svg class="a" style="left:616px;top:233px" width="12" height="20"><use href="#iHG"/></svg>
<svg class="a" style="left:635px;top:233px" width="24" height="20"><use href="#iLC"/></svg>
<svg class="a" style="left:665px;top:233px" width="16" height="20"><use href="#iSW"/></svg>
<svg class="a" style="left:691px;top:233px" width="16" height="20"><use href="#iCA"/></svg>
<svg class="a" style="left:714px;top:233px" width="23" height="20"><use href="#iHO"/></svg>
<svg class="a" style="left:739px;top:233px" width="25" height="20"><use href="#iPE"/></svg>
<svg class="a" style="left:764px;top:233px" width="27" height="20"><use href="#iFL"/></svg>
<svg class="a" style="left:795px;top:233px" width="19" height="20"><use href="#iIN"/></svg>
<svg class="a" style="left:18px;top:324px" width="12" height="12"><use href="#bar"/></svg>
<svg class="a" style="left:18px;top:339px" width="12" height="12"><use href="#bar"/></svg>
<svg class="a" style="left:18px;top:354px" width="12" height="12"><use href="#bar"/></svg>
<svg class="a" style="left:18px;top:369px" width="12" height="12"><use href="#bar"/></svg>
<svg class="a" style="left:18px;top:384px" width="12" height="12"><use href="#bar"/></svg>
<svg class="a" style="left:18px;top:399px" width="12" height="12"><use href="#bar"/></svg>
<svg class="a" style="left:18px;top:420px" width="12" height="12"><use href="#bar"/></svg>
<svg class="a" style="left:482px;top:442px" width="19" height="20"><use href="#iG"/></svg>
<svg class="a" style="left:509px;top:442px" width="19" height="20"><use href="#iCH"/></svg>
<svg class="a" style="left:534px;top:442px" width="19" height="20"><use href="#iAR"/></svg>
<svg class="a" style="left:563px;top:442px" width="12" height="20"><use href="#iDL"/></svg>
<svg class="a" style="left:584px;top:442px" width="24" height="20"><use href="#iBI"/></svg>
<svg class="a" style="left:616px;top:442px" width="12" height="20"><use href="#iHG"/></svg>
<svg class="a" style="left:635px;top:442px" width="24" height="20"><use href="#iLC"/></svg>
<svg class="a" style="left:665px;top:442px" width="16" height="20"><use href="#iSW"/></svg>
<svg class="a" style="left:691px;top:442px" width="16" height="20"><use href="#iCA"/></svg>
<svg class="a" style="left:714px;top:442px" width="23" height="20"><use href="#iHO"/></svg>
<svg class="a" style="left:739px;top:442px" width="25" height="20"><use href="#iPE"/></svg>
<svg class="a" style="left:764px;top:442px" width="27" height="20"><use href="#iFL"/></svg>
<svg class="a" style="left:795px;top:442px" width="19" height="20"><use href="#iIN"/></svg>
<svg class="a" style="left:18px;top:545px" width="12" height="12"><use href="#bar"/></svg>
<svg class="a" style="left:18px;top:560px" width="12" height="12"><use href="#bar"/></svg>
<svg class="a" style="left:18px;top:575px" width="12" height="12"><use href="#bar"/></svg>
<svg class="a" style="left:18px;top:590px" width="12" height="12"><use href="#bar"/></svg>
<svg class="a" style="left:18px;top:605px" width="12" height="12"><use href="#bar"/></svg>
<svg class="a" style="left:431px;top:622px" width="19" height="20"><use href="#iD"/></svg>
<svg class="a" style="left:456px;top:622px" width="19" height="20"><use href="#iT"/></svg>
<svg class="a" style="left:482px;top:622px" width="19" height="20"><use href="#iG"/></svg>
<svg class="a" style="left:509px;top:622px" width="19" height="20"><use href="#iCH"/></svg>
<svg class="a" style="left:534px;top:622px" width="19" height="20"><use href="#iAR"/></svg>
<svg class="a" style="left:563px;top:622px" width="12" height="20"><use href="#iDL"/></svg>
<svg class="a" style="left:584px;top:622px" width="24" height="20"><use href="#iBI"/></svg>
<svg class="a" style="left:616px;top:622px" width="12" height="20"><use href="#iHG"/></svg>
<svg class="a" style="left:635px;top:622px" width="24" height="20"><use href="#iLC"/></svg>
<svg class="a" style="left:665px;top:622px" width="16" height="20"><use href="#iSW"/></svg>
<svg class="a" style="left:691px;top:622px" width="16" height="20"><use href="#iCA"/></svg>
<svg class="a" style="left:714px;top:622px" width="23" height="20"><use href="#iHO"/></svg>
<svg class="a" style="left:739px;top:622px" width="25" height="20"><use href="#iPE"/></svg>
<svg class="a" style="left:764px;top:622px" width="27" height="20"><use href="#iFL"/></svg>
<svg class="a" style="left:795px;top:622px" width="19" height="20"><use href="#iIN"/></svg>
<span class="t b" style="left:17px;top:8px;transform:scaleX(1.2009)">29.07.2016 - İSTANBUL At Yarışları</span>
<span class="t" style="left:17px;top:20px;transform:scaleX(1.1247)">İstanbul Veliefendi Hipodromu</span>
<span class="t b" style="left:17px;top:32px;color:#1a9160;transform:scaleX(1.1463)">Çim Pist: YUMUŞAK(3)</span>
<span class="t b" style="left:17px;top:44px;color:#e0b060;transform:scaleX(1.1137)">Kum Pist: NORMAL</span>
<span class="t b" style="left:18px;top:70px;transform:scaleX(1.1290)">1.Koşu</span>
<span class="t" style="left:66px;top:70px;transform:scaleX(1.1672)">Saat: 14:00</span>
<span class="t u" style="left:137px;top:70px;color:#0000ee;transform:scaleX(1.1561)">Şartli&nbsp;&nbsp;1</span>
<span class="t u" style="left:258px;top:70px;color:#0000ee;transform:scaleX(1.0779)">2 YAŞLI İNGİLİZLER</span>
<span class="t" style="left:439px;top:70px;transform:scaleX(1.1091)">39.500 TL</span>
<span class="t u" style="left:551px;top:70px;color:#0000ee;transform:scaleX(1.0075)">ABBAS</span>
<span class="t b" style="left:651px;top:70px;color:#1a9160;transform:scaleX(1.1866)">1200 Çim</span>
<div class="c" style="left:32px;top:84px;width:31px;height:12px"><span class="t h b" style="left:0;top:0;color:#fff;transform:scaleX(1.1722)">Dozaj</span></div>
<span class="t h b" style="left:66.65px;top:84px;color:#fff;transform:scaleX(1.1507);transform-origin:50% 0">Bülten</span>
<span class="t h b" style="left:104.04px;top:84px;color:#fff;transform:scaleX(1.1335);transform-origin:50% 0">Puan</span>
<span class="t h b" style="left:150px;top:84px;color:#fff;transform:scaleX(1.2108)">At İsmi</span>
<span class="t h b" style="left:441.88px;top:84px;color:#fff;transform:scaleX(1.1127);transform-origin:50% 0">Kilo</span>
<span class="t h b" style="left:472px;top:84px;color:#fff;transform:scaleX(1.3858)">+ -</span>
<span class="t h b" style="left:500px;top:84px;color:#fff;transform:scaleX(1.1173)">Jokey</span>
<span class="t h b" style="right:224px;top:84px;color:#fff;transform:scaleX(1.1445);transform-origin:100% 0">St</span>
<span class="t h b" style="right:140px;top:84px;color:#fff;transform:scaleX(1.1626);transform-origin:100% 0">Son 10 yarışı</span>
<span class="t h b" style="right:97px;top:84px;color:#fff;transform:scaleX(1.1449);transform-origin:100% 0">5 Çim</span>
<span class="t h b" style="left:756.67px;top:84px;color:#fff;transform:scaleX(1.1864);transform-origin:50% 0">400m G.</span>
<div class="c" style="left:807.5px;top:84px;width:7.5px;height:12px"><span class="t h b" style="left:0;top:0;color:#fff;transform:scaleX(1.0446)">S</span></div>
<span class="t b" style="right:789px;top:98px;color:#cc0000;transform:scaleX(1.2536);transform-origin:100% 0">12</span>
<span class="t" style="right:722px;top:98px;color:#cc0000;transform:scaleX(1.1213);transform-origin:100% 0">90</span>
<span class="t b" style="left:150.5px;top:99px;transform:scaleX(1.1596)">1.BIG MAN</span>
<span class="t" style="left:399.8px;top:98px;transform:scaleX(1.1076)">2yde</span>
<span class="t" style="left:436.5px;top:98px;transform:scaleX(1.1213)">57</span>
<span class="t b" style="left:500.4px;top:98px;transform:scaleX(1.1064)">H.KARATAŞ</span>
<span class="t" style="left:611.5px;top:98px;transform:scaleX(1.1213)">5</span>
<span class="t b" style="right:789px;top:113px;color:#cc0000;transform:scaleX(1.2536);transform-origin:100% 0">2</span>
<span class="t" style="right:722px;top:113px;color:#cc0000;transform:scaleX(1.1213);transform-origin:100% 0">73</span>
<span class="t b" style="left:150.5px;top:114px;transform:scaleX(1.1544)">2.BIG SHOW</span>
<span class="t" style="left:226.78px;top:111px;font-size:8.16px;transform:scaleX(1.0167)">K</span>
<span class="t" style="left:399.8px;top:113px;transform:scaleX(1.1076)">2yde</span>
<span class="t" style="left:436.5px;top:113px;transform:scaleX(1.1213)">57</span>
<span class="t b" style="left:500.4px;top:113px;transform:scaleX(1.0762)">B.AVERBAK</span>
<span class="t" style="left:611.5px;top:113px;transform:scaleX(1.1213)">9</span>
<span class="t b" style="right:789px;top:128px;color:#cc0000;transform:scaleX(1.2536);transform-origin:100% 0">14</span>
<span class="t" style="right:722px;top:128px;color:#cc0000;transform:scaleX(1.1213);transform-origin:100% 0">63</span>
<span class="t b" style="left:150.5px;top:129px;transform:scaleX(1.1825)">3.OASIS (TUR)</span>
<span class="t" style="left:399.8px;top:128px;transform:scaleX(1.0976)">2yae</span>
<span class="t" style="left:436.5px;top:128px;transform:scaleX(1.1213)">57</span>
<span class="t b" style="left:500.4px;top:128px;transform:scaleX(1.0916)">A.KURŞUN</span>
<span class="t" style="left:611.5px;top:128px;transform:scaleX(1.1213)">2</span>
<span class="t b" style="right:789px;top:143px;color:#cc0000;transform:scaleX(1.2536);transform-origin:100% 0">28</span>
<span class="t" style="right:722px;top:143px;color:#cc0000;transform:scaleX(1.1213);transform-origin:100% 0">82</span>
<span class="t b" style="left:150.5px;top:144px;transform:scaleX(1.1507)">4.VICTORY FLIGHT</span>
<span class="t" style="left:262.82px;top:141px;font-size:8.16px;transform:scaleX(1.0167)">K</span>
<span class="t" style="left:399.8px;top:143px;transform:scaleX(1.1076)">2yde</span>
<span class="t" style="left:436.5px;top:143px;transform:scaleX(1.1213)">57</span>
<span class="t b" style="left:500.4px;top:143px;transform:scaleX(1.2110)">DENİZ YILDIZ</span>
<span class="t" style="left:611.5px;top:143px;transform:scaleX(1.1213)">7</span>
<span class="t b" style="right:789px;top:158px;color:#cc0000;transform:scaleX(1.2536);transform-origin:100% 0">12</span>
<span class="t" style="right:722px;top:158px;color:#cc0000;transform:scaleX(1.1213);transform-origin:100% 0">81</span>
<span class="t b" style="left:150.5px;top:159px;transform:scaleX(1.1727)">5.MISS GIRL</span>
<span class="t" style="left:224.24px;top:156px;font-size:8.16px;transform:scaleX(1.0127)">GKD</span>
<span class="t" style="left:399.8px;top:158px;transform:scaleX(1.1098)">2yad</span>
<span class="t" style="left:436.5px;top:158px;transform:scaleX(1.1213)">55</span>
<span class="t b" style="left:500.4px;top:158px;transform:scaleX(1.2229)">Ö.YILDIRIM</span>
<span class="t" style="left:611.5px;top:158px;transform:scaleX(1.1213)">6</span>
<span class="t b" style="right:789px;top:173px;color:#cc0000;transform:scaleX(1.2536);transform-origin:100% 0">16</span>
<span class="t" style="right:722px;top:173px;color:#cc0000;transform:scaleX(1.1224);transform-origin:100% 0">101</span>
<span class="t b" style="left:150.5px;top:174px;transform:scaleX(1.1368)">6.PETIT KURT</span>
<span class="t i" style="left:237.87px;top:174px;transform:scaleX(1.0292)">IRE</span>
<span class="t" style="left:399.8px;top:173px;transform:scaleX(1.1198)">2ydd</span>
<span class="t" style="left:436.5px;top:173px;transform:scaleX(1.1213)">55</span>
<span class="t b" style="left:500.4px;top:173px;transform:scaleX(1.0957)">AHMET ÇELİK</span>
<span class="t" style="left:611.5px;top:173px;transform:scaleX(1.1213)">3</span>
<span class="t b" style="right:789px;top:188px;color:#cc0000;transform:scaleX(1.2536);transform-origin:100% 0">18</span>
<span class="t" style="right:722px;top:188px;color:#cc0000;transform:scaleX(1.1213);transform-origin:100% 0">93</span>
<span class="t b" style="left:150.5px;top:189px;transform:scaleX(1.1670)">7.POINSETTIA</span>
<span class="t" style="left:237.47px;top:186px;font-size:8.16px;transform:scaleX(1.0167)">K</span>
<span class="t" style="left:399.8px;top:188px;transform:scaleX(1.1198)">2ydd</span>
<span class="t" style="left:436.5px;top:188px;transform:scaleX(1.1213)">55</span>
<span class="t b" style="left:500.4px;top:188px;transform:scaleX(1.0885)">F.YÜKSEL</span>
<span class="t" style="left:611.5px;top:188px;transform:scaleX(1.1213)">4</span>
<span class="t b" style="right:789px;top:203px;color:#cc0000;transform:scaleX(1.2536);transform-origin:100% 0">4</span>
<span class="t" style="right:722px;top:203px;color:#cc0000;transform:scaleX(1.1213);transform-origin:100% 0">79</span>
<span class="t b" style="left:150.5px;top:204px;transform:scaleX(1.1145)">8.RADIKAL BABY</span>
<span class="t" style="left:248.89px;top:201px;font-size:8.16px;transform:scaleX(0.9749)">G</span>
<span class="t" style="left:399.8px;top:203px;transform:scaleX(1.1098)">2yad</span>
<span class="t" style="left:436.5px;top:203px;transform:scaleX(1.1213)">55</span>
<span class="t b" style="left:500.4px;top:203px;transform:scaleX(1.0859)">A.SÖZEN</span>
<span class="t" style="left:611.5px;top:203px;transform:scaleX(1.1213)">1</span>
<span class="t b" style="right:789px;top:218px;color:#cc0000;transform:scaleX(1.2536);transform-origin:100% 0">16</span>
<span class="t" style="right:722px;top:218px;color:#cc0000;transform:scaleX(1.1213);transform-origin:100% 0">97</span>
<span class="t b" style="left:150.5px;top:219px;transform:scaleX(1.2231)">9.SEVİMLİ BİBİ</span>
<span class="t" style="left:241.84px;top:216px;font-size:8.16px;transform:scaleX(0.9955)">GK</span>
<span class="t" style="left:399.8px;top:218px;transform:scaleX(1.1198)">2ydd</span>
<span class="t" style="left:436.5px;top:218px;transform:scaleX(1.1213)">55</span>
<span class="t b" style="left:500.4px;top:218px;transform:scaleX(1.1037)">U.POLAT</span>
<span class="t" style="left:611.5px;top:218px;transform:scaleX(1.1213)">8</span>
<span class="t b" style="left:18px;top:243px;color:#cc0000;transform:scaleX(1.1646)">1. Altılı ganyan başlar, GÜNÜN GANYANI</span>
<span class="t b" style="left:18px;top:296px;transform:scaleX(1.1290)">2.Koşu</span>
<span class="t" style="left:66px;top:296px;transform:scaleX(1.1672)">Saat: 14:30</span>
<span class="t u" style="left:137px;top:296px;color:#0000ee;transform:scaleX(1.1561)">Şartli&nbsp;&nbsp;4</span>
<span class="t" style="left:180px;top:296px;transform:scaleX(1.2163)">/Y-3</span>
<span class="t u" style="left:258px;top:296px;color:#0000ee;transform:scaleX(1.0324)">4 ve YUKARI ARAPLAR</span>
<span class="t" style="left:439px;top:296px;transform:scaleX(1.1091)">33.500 TL</span>
<span class="t b" style="left:645px;top:296px;color:#1a9160;transform:scaleX(1.1866)">2100 Çim</span>
<div class="c" style="left:34px;top:311px;width:31px;height:12px"><span class="t h b" style="left:0;top:0;color:#fff;transform:scaleX(1.1722)">Dozaj</span></div>
<span class="t h b" style="left:68.65px;top:311px;color:#fff;transform:scaleX(1.1507);transform-origin:50% 0">Bülten</span>
<span class="t h b" style="left:106.04px;top:311px;color:#fff;transform:scaleX(1.1335);transform-origin:50% 0">Puan</span>
<span class="t h b" style="left:151px;top:311px;color:#fff;transform:scaleX(1.2108)">At İsmi</span>
<span class="t h b" style="left:439.88px;top:311px;color:#fff;transform:scaleX(1.1127);transform-origin:50% 0">Kilo</span>
<span class="t h b" style="left:470px;top:311px;color:#fff;transform:scaleX(1.3858)">+ -</span>
<span class="t h b" style="left:499px;top:311px;color:#fff;transform:scaleX(1.1173)">Jokey</span>
<span class="t h b" style="right:234px;top:311px;color:#fff;transform:scaleX(1.1445);transform-origin:100% 0">St</span>
<span class="t h b" style="right:147px;top:311px;color:#fff;transform:scaleX(1.1626);transform-origin:100% 0">Son 10 yarışı</span>
<span class="t h b" style="right:99px;top:311px;color:#fff;transform:scaleX(1.1449);transform-origin:100% 0">5 Çim</span>
<span class="t h b" style="left:755.67px;top:311px;color:#fff;transform:scaleX(1.1864);transform-origin:50% 0">400m G.</span>
<div class="c" style="left:807.5px;top:311px;width:7.5px;height:12px"><span class="t h b" style="left:0;top:0;color:#fff;transform:scaleX(1.0446)">S</span></div>
<span class="t" style="right:720px;top:325px;color:#cc0000;transform:scaleX(1.1224);transform-origin:100% 0">121</span>
<span class="t b" style="left:151.5px;top:326px;transform:scaleX(1.1085)">1.GÖLCÜK ASLANI</span>
<span class="t" style="left:397.8px;top:325px;transform:scaleX(1.1221)">6yke</span>
<span class="t" style="left:434.5px;top:325px;transform:scaleX(1.1213)">60</span>
<span class="t" style="left:470px;top:325px;color:#cc0000;transform:scaleX(1.2508)">+3</span>
<span class="t b" style="left:499.4px;top:326px;transform:scaleX(1.1660)">H.İ.AKKAYA</span>
<span class="t" style="left:568.72px;top:323px;font-size:8.16px;transform:scaleX(1.0913)">Ap.</span>
<span class="t" style="left:588px;top:325px;transform:scaleX(1.0720)">5 TS</span>
<span class="t" style="right:150.5px;top:325px;transform:scaleX(1.1222);transform-origin:100% 0">9232073327</span>
<span class="t b" style="right:102px;top:325px;color:#1a9160;transform:scaleX(1.2542);transform-origin:100% 0">73327</span>
<span class="t" style="right:720px;top:340px;color:#cc0000;transform:scaleX(1.1224);transform-origin:100% 0">157</span>
<span class="t b" style="left:151.5px;top:341px;transform:scaleX(1.1127)">2.BİLGEKURT</span>
<span class="t" style="left:229.78px;top:338px;font-size:8.16px;transform:scaleX(0.9749)">G</span>
<span class="t" style="left:397.8px;top:340px;transform:scaleX(1.0976)">9yae</span>
<span class="t" style="left:434.5px;top:340px;transform:scaleX(1.1213)">57</span>
<span class="t" style="left:470px;top:340px;color:#cc0000;transform:scaleX(1.2508)">+1</span>
<span class="t b" style="left:499.4px;top:341px;transform:scaleX(1.1186)">M.BAYDAN</span>
<span class="t" style="left:561.97px;top:338px;font-size:8.16px;transform:scaleX(1.0913)">Ap.</span>
<span class="t" style="left:601px;top:340px;transform:scaleX(1.1213)">2</span>
<span class="t" style="right:150.5px;top:340px;transform:scaleX(1.1222);transform-origin:100% 0">9877657233</span>
<span class="t b" style="right:102px;top:340px;color:#1a9160;transform:scaleX(1.2542);transform-origin:100% 0">56573</span>
<span class="t" style="right:720px;top:355px;color:#cc0000;transform:scaleX(1.1224);transform-origin:100% 0">185</span>
<span class="t b" style="left:151.5px;top:356px;transform:scaleX(1.1328)">3.SÜVARİOĞLU</span>
<span class="t" style="left:239.92px;top:353px;font-size:8.16px;transform:scaleX(0.9955)">GK</span>
<span class="t" style="left:397.8px;top:355px;transform:scaleX(1.0976)">5yae</span>
<span class="t" style="left:434.5px;top:355px;transform:scaleX(1.1213)">57</span>
<span class="t b" style="left:499.4px;top:356px;transform:scaleX(1.0773)">R.ARSLAN</span>
<span class="t" style="left:558.31px;top:353px;font-size:8.16px;transform:scaleX(1.0913)">Ap.</span>
<span class="t" style="left:588px;top:355px;transform:scaleX(1.0720)">7 TS</span>
<span class="t" style="right:150.5px;top:355px;transform:scaleX(1.1531);transform-origin:100% 0">1118695422</span>
<span class="t b" style="right:102px;top:355px;color:#1a9160;transform:scaleX(1.2542);transform-origin:100% 0">95422</span>
<span class="t" style="right:720px;top:370px;color:#cc0000;transform:scaleX(1.1742);transform-origin:100% 0">116</span>
<span class="t b" style="left:151.5px;top:371px;transform:scaleX(1.1227)">4.DURANTAŞ</span>
<span class="t" style="left:397.8px;top:370px;transform:scaleX(1.1221)">6yke</span>
<span class="t" style="left:434.5px;top:370px;transform:scaleX(1.1213)">56</span>
<span class="t b" style="left:499.4px;top:371px;transform:scaleX(1.2053)">M.İLERİ</span>
<span class="t" style="left:546.63px;top:368px;font-size:8.16px;transform:scaleX(1.0913)">Ap.</span>
<span class="t" style="left:588px;top:370px;transform:scaleX(1.0720)">6 TS</span>
<span class="t" style="right:150.5px;top:370px;transform:scaleX(1.1222);transform-origin:100% 0">2174213774</span>
<span class="t b" style="right:102px;top:370px;color:#1a9160;transform:scaleX(1.2542);transform-origin:100% 0">13774</span>
<span class="t" style="right:720px;top:385px;color:#cc0000;transform:scaleX(1.1224);transform-origin:100% 0">142</span>
<span class="t b" style="left:151.5px;top:386px;transform:scaleX(1.1781)">5.PALA DAYI</span>
<span class="t" style="left:226.45px;top:383px;font-size:8.16px;transform:scaleX(1.0460)">G D</span>
<span class="t" style="left:397.8px;top:385px;transform:scaleX(1.0976)">8yae</span>
<span class="t" style="left:434.5px;top:385px;transform:scaleX(1.1213)">56</span>
<span class="t b" style="left:499.4px;top:386px;transform:scaleX(1.2167)">H.ÇİZİK</span>
<span class="t" style="left:546.37px;top:383px;font-size:8.16px;transform:scaleX(1.0913)">Ap.</span>
<span class="t" style="left:601px;top:385px;transform:scaleX(1.1213)">1</span>
<span class="t" style="right:150.5px;top:385px;transform:scaleX(1.1222);transform-origin:100% 0">3587989762</span>
<span class="t b" style="right:102px;top:385px;color:#1a9160;transform:scaleX(1.2542);transform-origin:100% 0">99762</span>
<span class="t" style="right:720px;top:400px;color:#cc0000;transform:scaleX(1.2322);transform-origin:100% 0">111</span>
<span class="t b" style="left:151.5px;top:401px;transform:scaleX(1.1475)">6.TORNACI</span>
<span class="t" style="left:397.8px;top:400px;transform:scaleX(1.0976)">6yae</span>
<span class="t" style="left:434.5px;top:400px;transform:scaleX(1.1213)">56</span>
<span class="t" style="left:470px;top:400px;color:#000080;transform:scaleX(1.1900)">-1,5</span>
<span class="t b" style="left:499.4px;top:401px;transform:scaleX(1.0784)">A.ASLAN</span>
<span class="t" style="left:550.43px;top:398px;font-size:8.16px;transform:scaleX(1.0913)">Ap.</span>
<span class="t" style="left:601px;top:400px;transform:scaleX(1.1213)">4</span>
<span class="t" style="right:150.5px;top:400px;transform:scaleX(1.1222);transform-origin:100% 0">4612486900</span>
<span class="t b" style="right:102px;top:400px;color:#1a9160;transform:scaleX(1.2542);transform-origin:100% 0">96588</span>
<span class="t" style="right:720px;top:421.0px;color:#cc0000;transform:scaleX(1.1224);transform-origin:100% 0">109</span>
<span class="t b" style="left:151.5px;top:422.0px;transform:scaleX(1.1500)">7.NEVCİHAN</span>
<span class="t" style="left:225.16px;top:419.0px;font-size:8.16px;transform:scaleX(0.9955)">GK</span>
<span class="t" style="left:397.8px;top:421.0px;transform:scaleX(1.1346)">4ykd</span>
<span class="t" style="left:434.5px;top:421.0px;transform:scaleX(1.1458)">55,5</span>
<span class="t" style="left:470px;top:421.0px;color:#cc0000;transform:scaleX(1.2194)">+0,5</span>
<span class="t b" style="left:499.4px;top:414.0px;transform:scaleX(1.1419)">M.BEDİR</span>
<span class="t b" style="left:499.4px;top:428.0px;transform:scaleX(1.0827)">SAKALLILAR</span>
<span class="t" style="left:572.08px;top:425.0px;font-size:8.16px;transform:scaleX(1.0913)">Ap.</span>
<span class="t" style="left:601px;top:421.0px;transform:scaleX(1.1213)">3</span>
<span class="t" style="right:150.5px;top:421.0px;transform:scaleX(1.1222);transform-origin:100% 0">8444435345</span>
<span class="t b" style="right:102px;top:421.0px;color:#1a9160;transform:scaleX(1.2754);transform-origin:100% 0">-4435</span>
<span class="t" style="left:21.5px;top:452px;color:#000080;transform:scaleX(1.1277)">Üçlü ganyan, İkili, Sıralı ikili, Sıralı üçlü bahis, Çifte</span>
<span class="t b" style="left:18px;top:512px;transform:scaleX(1.1290)">3.Koşu</span>
<span class="t" style="left:66px;top:512px;transform:scaleX(1.1672)">Saat: 15:00</span>
<span class="t u" style="left:137px;top:512px;color:#0000ee;transform:scaleX(1.1102)">Kisa Vadeli&nbsp;&nbsp;6</span>
<span class="t u" style="left:258px;top:512px;color:#0000ee;transform:scaleX(1.0691)">3 ve YUKARI İNGİLİZLER</span>
<span class="t" style="left:439px;top:512px;transform:scaleX(1.1091)">52.500 TL</span>
<span class="t b" style="left:648px;top:512px;color:#e0b060;transform:scaleX(1.1896)">1400 Kum</span>
<span class="t u" style="left:550px;top:506px;color:#0000ee;transform:scaleX(1.0211)">SAFİYETTİN</span>
<span class="t u" style="left:550px;top:518px;color:#0000ee;transform:scaleX(1.0043)">SAKARYA</span>
<div class="c" style="left:32px;top:532px;width:31px;height:12px"><span class="t h b" style="left:0;top:0;color:#fff;transform:scaleX(1.1722)">Dozaj</span></div>
<span class="t h b" style="left:66.65px;top:532px;color:#fff;transform:scaleX(1.1507);transform-origin:50% 0">Bülten</span>
<span class="t h b" style="left:104.04px;top:532px;color:#fff;transform:scaleX(1.1335);transform-origin:50% 0">Puan</span>
<span class="t h b" style="left:149px;top:532px;color:#fff;transform:scaleX(1.2108)">At İsmi</span>
<span class="t h b" style="left:441.88px;top:532px;color:#fff;transform:scaleX(1.1127);transform-origin:50% 0">Kilo</span>
<span class="t h b" style="left:472px;top:532px;color:#fff;transform:scaleX(1.3858)">+ -</span>
<span class="t h b" style="left:499px;top:532px;color:#fff;transform:scaleX(1.1173)">Jokey</span>
<span class="t h b" style="right:221px;top:532px;color:#fff;transform:scaleX(1.1445);transform-origin:100% 0">St</span>
<span class="t h b" style="right:139px;top:532px;color:#fff;transform:scaleX(1.1626);transform-origin:100% 0">Son 10 yarışı</span>
<span class="t h b" style="right:94px;top:532px;color:#fff;transform:scaleX(1.1541);transform-origin:100% 0">5 Kum</span>
<span class="t h b" style="left:758.67px;top:532px;color:#fff;transform:scaleX(1.1864);transform-origin:50% 0">400m G.</span>
<div class="c" style="left:808.5px;top:532px;width:6.5px;height:12px"><span class="t h b" style="left:0;top:0;color:#fff;transform:scaleX(1.0446)">S</span></div>
<span class="t b" style="right:789px;top:546px;color:#cc0000;transform:scaleX(1.2536);transform-origin:100% 0">14</span>
<span class="t" style="right:722px;top:546px;color:#cc0000;transform:scaleX(1.1224);transform-origin:100% 0">200</span>
<span class="t b" style="left:149.5px;top:547px;transform:scaleX(1.1652)">1.BIG BROWN (TUR)</span>
<span class="t" style="left:268.26px;top:544px;font-size:8.16px;transform:scaleX(0.9955)">GK</span>
<span class="t" style="left:399.8px;top:546px;transform:scaleX(1.0976)">4yae</span>
<span class="t" style="left:436.5px;top:546px;transform:scaleX(1.1213)">60</span>
<span class="t" style="left:472px;top:546px;color:#cc0000;transform:scaleX(1.2194)">+2,5</span>
<span class="t b" style="left:499.4px;top:546px;transform:scaleX(1.0773)">R.ARSLAN</span>
<span class="t" style="left:601px;top:546px;transform:scaleX(1.0720)">5 TS</span>
<span class="t" style="right:142.5px;top:546px;transform:scaleX(1.1376);transform-origin:100% 0">4721024112</span>
<span class="t b" style="right:97px;top:546px;color:#e0b060;transform:scaleX(1.2796);transform-origin:100% 0">24112</span>
<span class="t b" style="right:789px;top:561px;color:#cc0000;transform:scaleX(1.2536);transform-origin:100% 0">16</span>
<span class="t" style="right:722px;top:561px;color:#cc0000;transform:scaleX(1.1224);transform-origin:100% 0">248</span>
<span class="t b" style="left:149.5px;top:562px;transform:scaleX(1.0994)">2.DUKE OF KENT</span>
<span class="t" style="left:245.55px;top:559px;font-size:8.16px;transform:scaleX(1.0460)">G D</span>
<span class="t" style="left:399.8px;top:561px;transform:scaleX(1.0976)">4yae</span>
<span class="t" style="left:436.5px;top:561px;transform:scaleX(1.1213)">60</span>
<span class="t" style="left:472px;top:561px;color:#cc0000;transform:scaleX(1.2508)">+2</span>
<span class="t b" style="left:499.4px;top:561px;transform:scaleX(1.2229)">Ö.YILDIRIM</span>
<span class="t" style="left:614px;top:561px;transform:scaleX(1.1213)">4</span>
<span class="t" style="right:142.5px;top:561px;transform:scaleX(1.1222);transform-origin:100% 0">2324433321</span>
<span class="t b" style="right:97px;top:561px;color:#e0b060;transform:scaleX(1.2542);transform-origin:100% 0">33321</span>
<span class="t b" style="right:789px;top:576px;color:#cc0000;transform:scaleX(1.2536);transform-origin:100% 0">12</span>
<span class="t" style="right:722px;top:576px;color:#cc0000;transform:scaleX(1.1224);transform-origin:100% 0">197</span>
<span class="t b" style="left:149.5px;top:577px;transform:scaleX(1.1022)">3.HARPUTLUNUN OĞLU</span>
<span class="t" style="left:287.11px;top:574px;font-size:8.16px;transform:scaleX(1.0471)">D</span>
<span class="t" style="left:399.8px;top:576px;transform:scaleX(1.1076)">4yde</span>
<span class="t" style="left:436.5px;top:576px;transform:scaleX(1.1213)">60</span>
<span class="t b" style="left:499.4px;top:576px;transform:scaleX(1.1037)">U.POLAT</span>
<span class="t" style="left:614px;top:576px;transform:scaleX(1.1213)">1</span>
<span class="t" style="right:142.5px;top:576px;transform:scaleX(1.1222);transform-origin:100% 0">1783013135</span>
<span class="t b" style="right:97px;top:576px;color:#e0b060;transform:scaleX(1.2542);transform-origin:100% 0">78301</span>
<span class="t b" style="right:789px;top:591px;color:#cc0000;transform:scaleX(1.2536);transform-origin:100% 0">10</span>
<span class="t" style="right:722px;top:591px;color:#cc0000;transform:scaleX(1.2322);transform-origin:100% 0">111</span>
<span class="t b" style="left:149.5px;top:592px;transform:scaleX(1.1442)">4.ATEN</span>
<span class="t" style="left:399.8px;top:591px;transform:scaleX(1.1076)">6yde</span>
<span class="t" style="left:436.5px;top:591px;transform:scaleX(1.1213)">56</span>
<span class="t" style="left:472px;top:591px;color:#cc0000;transform:scaleX(1.2508)">+1</span>
<span class="t b" style="left:499.4px;top:591px;transform:scaleX(1.2110)">DENİZ YILDIZ</span>
<span class="t" style="left:614px;top:591px;transform:scaleX(1.1213)">3</span>
<span class="t" style="right:142.5px;top:591px;transform:scaleX(1.1222);transform-origin:100% 0">3455372736</span>
<span class="t b" style="right:97px;top:591px;color:#e0b060;transform:scaleX(1.2542);transform-origin:100% 0">32736</span>
<span class="t b" style="right:789px;top:606px;color:#cc0000;transform:scaleX(1.2536);transform-origin:100% 0">14</span>
<span class="t" style="right:722px;top:606px;color:#cc0000;transform:scaleX(1.1224);transform-origin:100% 0">210</span>
<span class="t b" style="left:149.5px;top:607px;transform:scaleX(1.1035)">5.LEMNOS</span>
<span class="t" style="left:212.67px;top:604px;font-size:8.16px;transform:scaleX(1.0167)">K</span>
<span class="t" style="left:399.8px;top:606px;transform:scaleX(1.1076)">3yde</span>
<span class="t" style="left:436.5px;top:606px;transform:scaleX(1.1213)">53</span>
<span class="t" style="left:472px;top:606px;color:#000080;transform:scaleX(1.2028)">-2</span>
<span class="t b" style="left:499.4px;top:606px;transform:scaleX(1.1064)">H.KARATAŞ</span>
<span class="t" style="left:614px;top:606px;transform:scaleX(1.1213)">2</span>
<span class="t" style="right:142.5px;top:606px;transform:scaleX(1.1517);transform-origin:100% 0">-153302611</span>
<span class="t b" style="right:97px;top:606px;color:#e0b060;transform:scaleX(1.2796);transform-origin:100% 0">02611</span>
<span class="t b" style="left:18px;top:621px;color:#cc0000;transform:scaleX(1.1635)">Yedili Ganyan başlar.</span>
<span class="t" style="left:21px;top:633px;color:#000080;transform:scaleX(1.1142)">Yedili Plase bu koşudan başlar, Sıralı ikili, Çifte</span>
</body></html>
